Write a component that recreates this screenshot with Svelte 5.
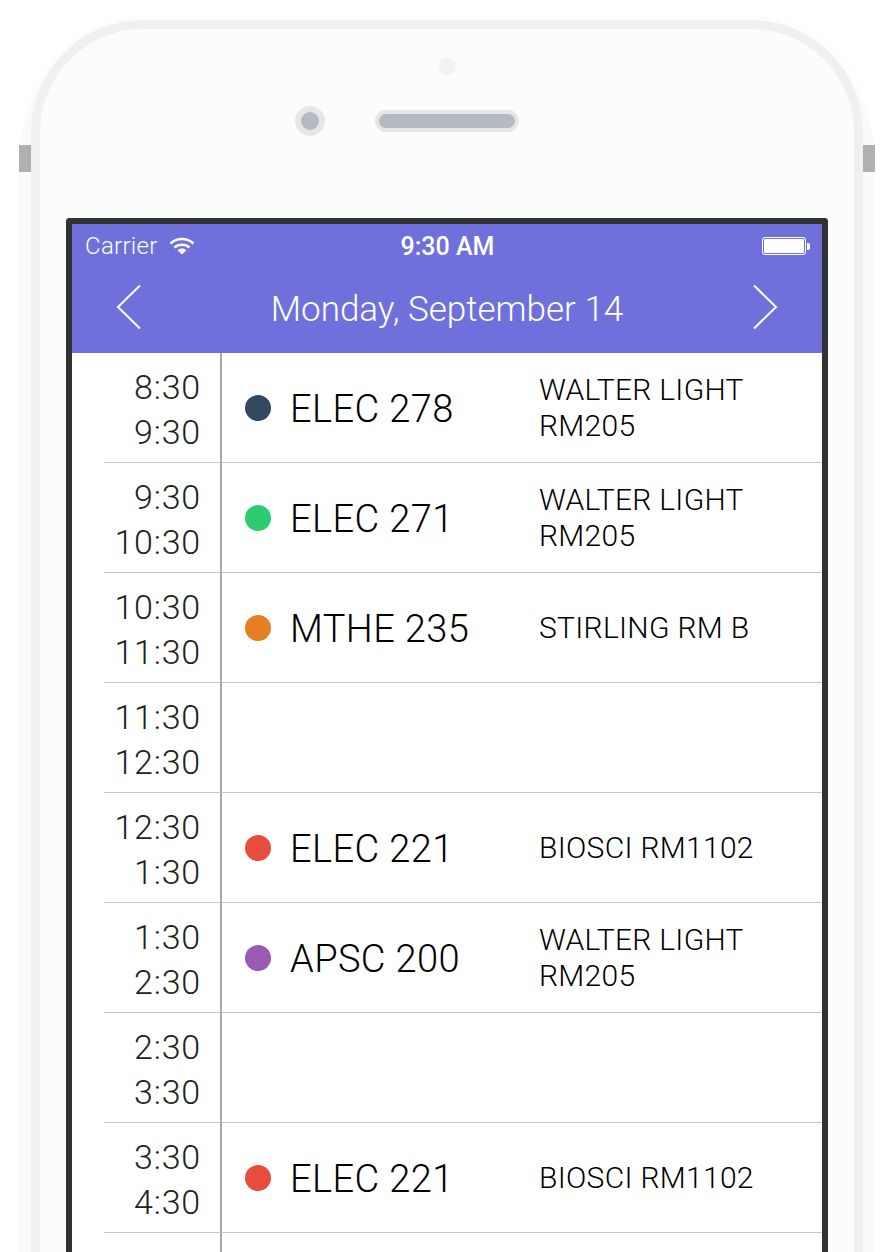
<script>
  const rows = [
    { from: '8:30', to: '9:30', code: 'ELEC 278', color: '#34495e', room: ['WALTER LIGHT', 'RM205'] },
    { from: '9:30', to: '10:30', code: 'ELEC 271', color: '#2ecc71', room: ['WALTER LIGHT', 'RM205'] },
    { from: '10:30', to: '11:30', code: 'MTHE 235', color: '#e67e22', room: ['STIRLING RM B'] },
    { from: '11:30', to: '12:30' },
    { from: '12:30', to: '1:30', code: 'ELEC 221', color: '#e74c3c', room: ['BIOSCI RM1102'] },
    { from: '1:30', to: '2:30', code: 'APSC 200', color: '#9b59b6', room: ['WALTER LIGHT', 'RM205'] },
    { from: '2:30', to: '3:30' },
    { from: '3:30', to: '4:30', code: 'ELEC 221', color: '#e74c3c', room: ['BIOSCI RM1102'] },
    {}
  ];
</script>

<div class="page">
  <div class="phone">
    <span class="sideBtn left"></span>
    <span class="sideBtn right"></span>
    <div class="bezel">
      <div class="sensor"></div>
      <div class="earRow">
        <div class="camera"></div>
        <div class="speaker"></div>
      </div>

      <div class="screen">
        <header class="bar">
          <div class="status">
            <div class="carrier">
              Carrier
              <svg width="26" height="18" viewBox="0 0 26 18" aria-hidden="true">
                <path d="M1.5 6.5C8 .5 18 .5 24.500 6.500" fill="none" stroke="#fff" stroke-width="2.600" />
                <path d="M5.500 10.500C9.500 6.800 16.500 6.800 20.500 10.500" fill="none" stroke="#fff" stroke-width="2.600" />
                <path d="M8.500 13.200C11 11 15 11 17.500 13.200L13 17.500Z" fill="#fff" />
              </svg>
            </div>
            <div class="clock">9:30 AM</div>
            <div class="battery"><span class="cell"></span><span class="nub"></span></div>
          </div>
          <div class="dateNav">
            <svg width="26" height="46" viewBox="0 0 26 46" aria-label="Previous day">
              <path d="M24 1.500L2 23L24 44.500" fill="none" stroke="#fff" stroke-width="2" />
            </svg>
            <h1>Monday, September 14</h1>
            <svg width="26" height="46" viewBox="0 0 26 46" aria-label="Next day">
              <path d="M2 1.500L24 23L2 44.500" fill="none" stroke="#fff" stroke-width="2" />
            </svg>
          </div>
        </header>

        <div class="list">
          {#each rows as row}
            <div class="row">
              <div class="time">
                <span>{row.from ?? ''}</span>
                <span>{row.to ?? ''}</span>
              </div>
              <div class="slot">
                {#if row.code}
                  <span class="dot" style="background:{row.color}"></span>
                  <span class="code">{row.code}</span>
                  <div class="room">
                    {#each row.room as line}
                      <span>{line}</span>
                    {/each}
                  </div>
                {/if}
              </div>
            </div>
          {/each}
        </div>
      </div>
    </div>
  </div>
</div>

<style>
  :global(body) {
    margin: 0;
    background: #fff;
    font-family: Roboto, "Liberation Sans", sans-serif;
  }

  .page {
    width: 896px;
    height: 1252px;
    overflow: hidden;
    padding: 20px 33px 0 31px;
    box-sizing: border-box;
  }

  .phone {
    position: relative;
    height: 1400px;
    border-radius: 112px 112px 0 0;
    box-shadow: 0 26px 0 12px #f9fafc, 0 2px 10px 8px #fdfdfe;
  }

  .bezel {
    position: relative;
    height: 100%;
    box-sizing: border-box;
    border: 9px solid #eef0f2;
    border-radius: 112px 112px 0 0;
    background: #fbfcfc;
    padding: 0 26px;
  }

  .sideBtn {
    position: absolute;
    top: 125px;
    width: 12px;
    height: 27px;
    background: #b0b0b0;
  }
  .sideBtn.left { left: -12px; }
  .sideBtn.right { right: -12px; }

  .sensor {
    width: 18px;
    height: 18px;
    margin: 28px auto 0;
    border-radius: 50%;
    background: #f3f3f3;
  }

  .earRow {
    display: grid;
    grid-template-columns: 1fr 144px 1fr;
    align-items: center;
    margin-top: 31px;
    height: 30px;
  }

  .camera {
    justify-self: end;
    margin-right: 50px;
    width: 18px;
    height: 18px;
    border: 6px solid #e6e6e6;
    border-radius: 50%;
    background: #b3bbc1;
  }

  .speaker {
    grid-column: 2;
    box-sizing: border-box;
    height: 22px;
    border: 4px solid #e6e6e6;
    border-radius: 11px;
    background: #b3bbc1;
  }

  .screen {
    margin-top: 82px;
    border: 6px solid #333;
    border-bottom: 0;
    border-radius: 4px 4px 0 0;
    background: #fff;
  }

  .bar {
    height: 129px;
    background: #7070dc;
    color: #fff;
  }

  .status {
    display: grid;
    grid-template-columns: 1fr auto 1fr;
    align-items: center;
    height: 44px;
    padding: 0 12px 0 13px;
    font-size: 25px;
  }

  .carrier {
    display: flex;
    align-items: center;
    gap: 11px;
    font-size: 24px;
    letter-spacing: 0.3px;
    font-weight: 300;
  }

  .clock { font-weight: 500; }

  .battery {
    justify-self: end;
    display: flex;
    align-items: center;
  }

  .cell {
    width: 42px;
    height: 16px;
    border: 1px solid #fff;
    outline: 1px solid #7070dc;
    outline-offset: -2px;
    border-radius: 3px;
    background: #fff;
  }

  .nub {
    width: 3px;
    height: 7px;
    margin-left: 1px;
    border-radius: 0 2px 2px 0;
    background: #fff;
  }

  .dateNav {
    display: flex;
    align-items: center;
    justify-content: space-between;
    height: 78px;
    padding: 0 44px;
  }

  h1 {
    margin: 0;
    padding-top: 4px;
    font-size: 35px;
    font-weight: 300;
  }

  .row {
    display: grid;
    grid-template-columns: 148px 1fr;
    height: 110px;
  }

  .time {
    display: flex;
    flex-direction: column;
    align-items: flex-end;
    justify-content: center;
    padding: 4px 19px 0 0;
    margin-left: 32px;
    border-bottom: 1px solid #c6c6c8;
    font-size: 34px;
    font-weight: 300;
    letter-spacing: 0.8px;
    line-height: 45px;
    color: #222;
  }

  .slot {
    display: flex;
    align-items: center;
    padding-left: 23px;
    border-left: 2px solid #a8a8a8;
    border-bottom: 1px solid #c6c6c8;
    color: #000;
  }

  .dot {
    width: 26px;
    height: 26px;
    border-radius: 50%;
    flex: none;
  }

  .code {
    width: 249px;
    margin-left: 19px;
    padding-top: 2px;
    font-size: 38px;
    font-weight: 300;
    letter-spacing: 0.4px;
  }

  .room {
    display: flex;
    flex-direction: column;
    font-size: 30px;
    font-weight: 300;
    letter-spacing: 0.3px;
    line-height: 36px;
  }
</style>
